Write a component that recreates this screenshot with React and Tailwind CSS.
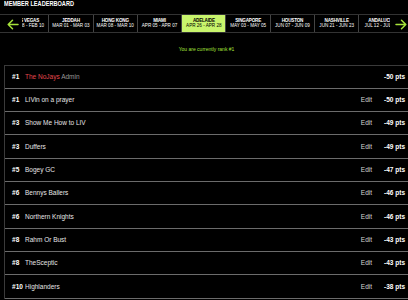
import React from "react";

const events = [
  { city: "Las Vegas", dates: "FEB 08 - FEB 10" },
  { city: "Jeddah", dates: "MAR 01 - MAR 03" },
  { city: "Hong Kong", dates: "MAR 08 - MAR 10" },
  { city: "Miami", dates: "APR 05 - APR 07" },
  { city: "Adelaide", dates: "APR 26 - APR 28", active: true },
  { city: "Singapore", dates: "MAY 03 - MAY 05" },
  { city: "Houston", dates: "JUN 07 - JUN 09" },
  { city: "Nashville", dates: "JUN 21 - JUN 23" },
  { city: "Andalucia", dates: "JUL 12 - JUL 14" },
];

const teams = [
  { rank: 1, name: "The NoJays", admin: true, pts: -50 },
  { rank: 1, name: "LIVin on a prayer", pts: -50, edit: true },
  { rank: 3, name: "Show Me How to LIV", pts: -49, edit: true },
  { rank: 3, name: "Duffers", pts: -49, edit: true },
  { rank: 5, name: "Bogey GC", pts: -47, edit: true },
  { rank: 6, name: "Bennys Ballers", pts: -46, edit: true },
  { rank: 6, name: "Northern Knights", pts: -46, edit: true },
  { rank: 8, name: "Rahm Or Bust", pts: -43, edit: true },
  { rank: 8, name: "TheSceptic", pts: -43, edit: true },
  { rank: 10, name: "Highlanders", pts: -38, edit: true },
];

function Arrow({ dir }) {
  return (
    <svg width="12" height="11" viewBox="0 0 12 11" fill="none" stroke="#a6e33a" strokeWidth="1.5" strokeLinecap="round" strokeLinejoin="round">
      {dir === "left" ? (
        <path d="M11 5.5H1.2M5.5 1.2L1.2 5.5l4.3 4.3" />
      ) : (
        <path d="M1 5.5h9.8M6.5 1.2l4.3 4.3-4.3 4.3" />
      )}
    </svg>
  );
}

export default function App() {
  return (
    <div className="w-[408px] h-[300px] bg-black text-white overflow-hidden font-['Liberation_Sans',Arial,sans-serif]">
      <div className="h-[14px] pl-[4px] leading-none">
        <h1 className="w-max -mt-[0.5px] text-[8px] leading-none font-black uppercase scale-x-[0.7] origin-left">
          Member Leaderboard
        </h1>
      </div>

      {/* event tabs */}
      <div className="flex items-center h-[19px] border-y border-[#333]">
        <button className="w-[22px] h-full shrink-0 flex items-center pl-[7px] pt-[2px]">
          <Arrow dir="left" />
        </button>
        <div className="flex-1 h-full overflow-hidden">
          <div className="flex h-full -ml-[17px]">
            {events.map((ev) => (
              <div
                key={ev.city}
                className={`w-[44.3px] shrink-0 h-full flex flex-col items-center justify-center border-r border-[#444] whitespace-nowrap ${
                  ev.active ? "bg-[#c8f46c] text-black" : "text-white"
                }`}
              >
                <span className="text-[4.6px] leading-[5px] font-black uppercase tracking-[-0.2px]">{ev.city}</span>
                <span className="text-[4.6px] leading-[6px] font-medium">{ev.dates}</span>
              </div>
            ))}
          </div>
        </div>
        <button className="w-[18px] h-full shrink-0 flex items-center pl-[5px] pt-[2px]">
          <Arrow dir="right" />
        </button>
      </div>

      <div className="h-[32px] pt-[14.5px] pl-[5px] text-center text-[5px] leading-[5px] text-[#a6e33a]">
        You are currently rank #1
      </div>

      {/* leaderboard */}
      <div className="ml-[4px] w-[410px] border-l border-t border-[#3a3a3a]">
        {teams.map((t, i) => (
          <div key={i} className="h-[23.33px] flex items-center border-b border-[#6b6b6b] pl-[7px] pr-[9px] text-[6.5px]">
            <span className="w-[13px] shrink-0 font-bold">#{t.rank}</span>
            <span className="flex-1 text-[#e6e6e6]">
              {t.admin ? (
                <>
                  <span className="text-[#e5484d]">{t.name}</span> <span className="text-[#9a9a9a]">Admin</span>
                </>
              ) : (
                t.name
              )}
            </span>
            {t.edit && <span className="text-[#d6d6d6] mr-[12px]">Edit</span>}
            <span className="font-bold">{t.pts} pts</span>
          </div>
        ))}
      </div>
    </div>
  );
}
